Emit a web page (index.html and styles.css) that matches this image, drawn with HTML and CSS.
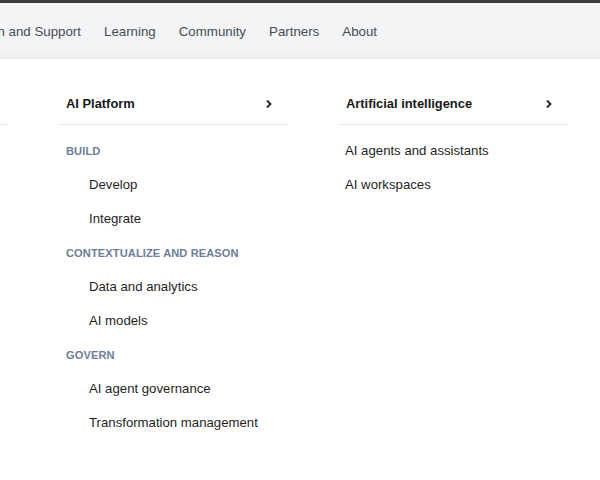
FILE: index.html
```html
<!DOCTYPE html>
<html lang="en">
<head>
<meta charset="utf-8">
<link rel="stylesheet" href="styles.css">
</head>
<body>
<div class="topbar"></div>
<nav class="nav">
  <ul class="nav-list">
    <li class="nav-item first"><span>Implementation and Support</span></li>
    <li class="nav-item">Learning</li>
    <li class="nav-item">Community</li>
    <li class="nav-item">Partners</li>
    <li class="nav-item">About</li>
  </ul>
</nav>
<main class="panel">
  <div class="col col-prev"><div class="col-head"></div></div>
  <div class="col">
    <div class="col-head"><span>AI Platform</span><svg class="chev" width="10" height="10" viewBox="0 0 10 10"><path d="M3 1.5 L6.5 5 L3 8.5" fill="none" stroke="#222" stroke-width="1.8"/></svg></div>
    <div class="group">BUILD</div>
    <a class="item sub">Develop</a>
    <a class="item sub">Integrate</a>
    <div class="group">CONTEXTUALIZE AND REASON</div>
    <a class="item sub">Data and analytics</a>
    <a class="item sub">AI models</a>
    <div class="group">GOVERN</div>
    <a class="item sub">AI agent governance</a>
    <a class="item sub">Transformation management</a>
  </div>
  <div class="col">
    <div class="col-head"><span>Artificial intelligence</span><svg class="chev" width="10" height="10" viewBox="0 0 10 10"><path d="M3 1.5 L6.5 5 L3 8.5" fill="none" stroke="#222" stroke-width="1.8"/></svg></div>
    <a class="item">AI agents and assistants</a>
    <a class="item">AI workspaces</a>
  </div>
</main>
</body>
</html>
```
FILE: styles.css
```css
* {
  box-sizing: border-box;
}
html, body {
  margin: 0;
  padding: 0;
  background: #ffffff;
  font-family: "Liberation Sans", Arial, sans-serif;
  overflow: hidden;
}
.topbar {
  height: 3px;
  background: #3a3b3c;
}
.nav {
  height: 56px;
  background: linear-gradient(to bottom, #f3f4f5 0%, #f3f4f5 82%, #ebeced 100%);
  overflow: hidden;
}
.nav-list {
  list-style: none;
  margin: 0;
  padding: 0;
  display: flex;
  gap: 23px;
  height: 100%;
  align-items: center;
  white-space: nowrap;
}
.nav-item {
  font-size: 13.3px;
  color: #464d56;
}
.nav-item.first {
  width: 81px;
  flex-shrink: 0;
  display: flex;
  justify-content: flex-end;
  overflow: hidden;
}
.panel {
  display: flex;
  gap: 50px;
  padding-top: 29px;
}
.col {
  width: 230px;
  flex-shrink: 0;
  display: flex;
  flex-direction: column;
}
.col-prev {
  width: 8px;
}
.col-prev .col-head {
  padding: 0;
}
.col-head {
  height: 37px;
  border-bottom: 1px solid #e6e7e8;
  display: flex;
  align-items: flex-start;
  justify-content: space-between;
  padding: 8px 14px 0 8px;
  line-height: 16px;
  font-size: 12.9px;
  font-weight: 700;
  color: #181818;
  margin-bottom: 9px;
}
.chev {
  display: block;
  margin-top: 3px;
}
.group {
  height: 34px;
  line-height: 34px;
  padding-left: 8px;
  font-size: 11.1px;
  font-weight: 700;
  color: #6b7e99;
  letter-spacing: 0.1px;
}
.item {
  display: block;
  height: 34px;
  line-height: 34px;
  padding-left: 7px;
  font-size: 13.2px;
  color: #1e1e1e;
}
.item.sub {
  padding-left: 31px;
}
```
